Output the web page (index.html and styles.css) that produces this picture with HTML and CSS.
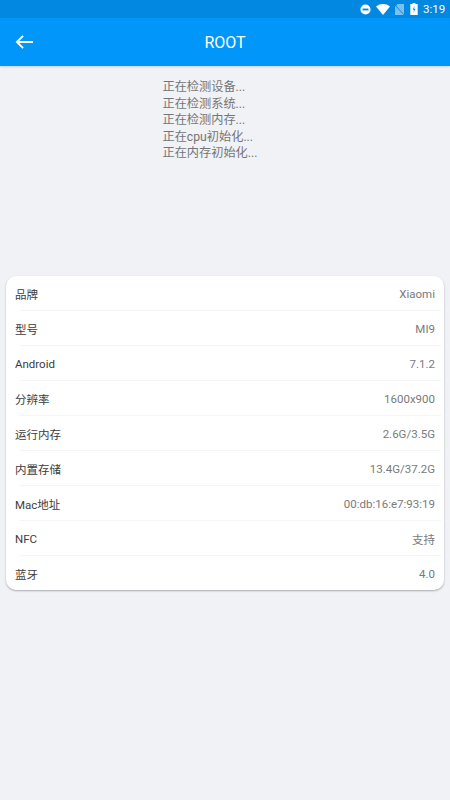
FILE: index.html
```html
<!DOCTYPE html>
<html lang="en">
<head>
    <meta name="viewport" content="width=device-width, initial-scale=1.0">
    <title>ROOT</title>
    <link rel="stylesheet" href="styles.css">
</head>
<body>
    <div class="status-bar">
        <svg class="icon-dnd" viewBox="0 0 12 12"><circle cx="6" cy="6" r="5.5" fill="#fff"/><rect x="2.8" y="5" width="6.4" height="2" fill="#0288e0"/></svg>
        <svg class="icon-wifi" viewBox="0 0 14 11"><path d="M0 2.5C4-.8 10-.8 14 2.5L7 11z" fill="#fff"/></svg>
        <svg class="icon-sim" viewBox="0 0 10 12"><path d="M3 0h7v12H0V3z" fill="#7cc0ee"/><path d="M0 1l10 11" stroke="#0288e0" stroke-width="1"/></svg>
        <svg class="icon-battery" viewBox="0 0 8 13"><path d="M2.5 0h3v1H8v12H0V1h2.500z" fill="#fff"/><path d="M4.600 3L2.600 7.300H4L3.400 10.500 5.500 6.200H4.100z" fill="#0288e0"/></svg>
        <span class="time">3:19</span>
    </div>

    <header class="app-bar">
        <svg class="back" viewBox="0 0 20 16"><path d="M19 8H2M8.500 1.500L2 8l6.500 6.500" fill="none" stroke="#fff" stroke-width="2"/></svg>
        <span class="title">ROOT</span>
    </header>

    <div class="log">
        <div>正在检测设备...</div>
        <div>正在检测系统...</div>
        <div>正在检测内存...</div>
        <div>正在cpu初始化...</div>
        <div>正在内存初始化...</div>
    </div>

    <div class="card">
        <div class="row"><span class="label">品牌</span><span class="value">Xiaomi</span></div>
        <div class="row"><span class="label">型号</span><span class="value">MI9</span></div>
        <div class="row"><span class="label">Android</span><span class="value">7.1.2</span></div>
        <div class="row"><span class="label">分辨率</span><span class="value">1600x900</span></div>
        <div class="row"><span class="label">运行内存</span><span class="value">2.6G/3.5G</span></div>
        <div class="row"><span class="label">内置存储</span><span class="value">13.4G/37.2G</span></div>
        <div class="row"><span class="label">Mac地址</span><span class="value">00:db:16:e7:93:19</span></div>
        <div class="row"><span class="label">NFC</span><span class="value">支持</span></div>
        <div class="row"><span class="label">蓝牙</span><span class="value">4.0</span></div>
    </div>
</body>
</html>
```

FILE: styles.css
```css
* {
    margin: 0;
    padding: 0;
    box-sizing: border-box;
}
body {
    width: 450px;
    height: 800px;
    overflow: hidden;
    background: #f0f2f6;
    font-family: "Roboto", "Noto Sans CJK SC", sans-serif;
}
.status-bar {
    height: 18px;
    background: #0288e0;
    display: flex;
    align-items: center;
    justify-content: flex-end;
    padding-right: 6px;
}
.icon-dnd {
    width: 11px;
    height: 11px;
    margin-right: 5px;
}
.icon-wifi {
    width: 14px;
    height: 11px;
    margin-right: 5px;
}
.icon-sim {
    width: 9px;
    height: 11px;
    margin-right: 6px;
}
.icon-battery {
    width: 8px;
    height: 12px;
    margin-right: 5px;
}
.time {
    color: #fff;
    font-size: 11.5px;
    width: 21px;
}
.app-bar {
    height: 48px;
    background: #0096fa;
    box-shadow: 0 1px 2px rgba(0, 0, 0, 0.15);
    display: flex;
    align-items: center;
    justify-content: center;
    position: relative;
}
.back {
    position: absolute;
    left: 15px;
    top: 16px;
    width: 19px;
    height: 16px;
}
.title {
    color: #fff;
    font-size: 16px;
}
.log {
    height: 210px;
    padding: 13px 0 0 162.5px;
    color: #757575;
    font-size: 12.2px;
    line-height: 16.5px;
}
.card {
    margin: 0 6px;
    height: 314px;
    background: #fff;
    border-radius: 10px;
    box-shadow: 0 1px 2px rgba(0, 0, 0, 0.3);
}
.row {
    height: 35px;
    margin-left: 9px;
    padding-right: 9px;
    display: flex;
    align-items: center;
    justify-content: space-between;
    font-size: 11.5px;
    position: relative;
}
.row:not(:last-child)::after {
    content: "";
    position: absolute;
    left: 5px;
    right: 3px;
    bottom: 0;
    height: 1px;
    background: #f4f5f7;
}
.label {
    color: #3c3c3c;
}
.value {
    color: #7a7a7a;
}
```
